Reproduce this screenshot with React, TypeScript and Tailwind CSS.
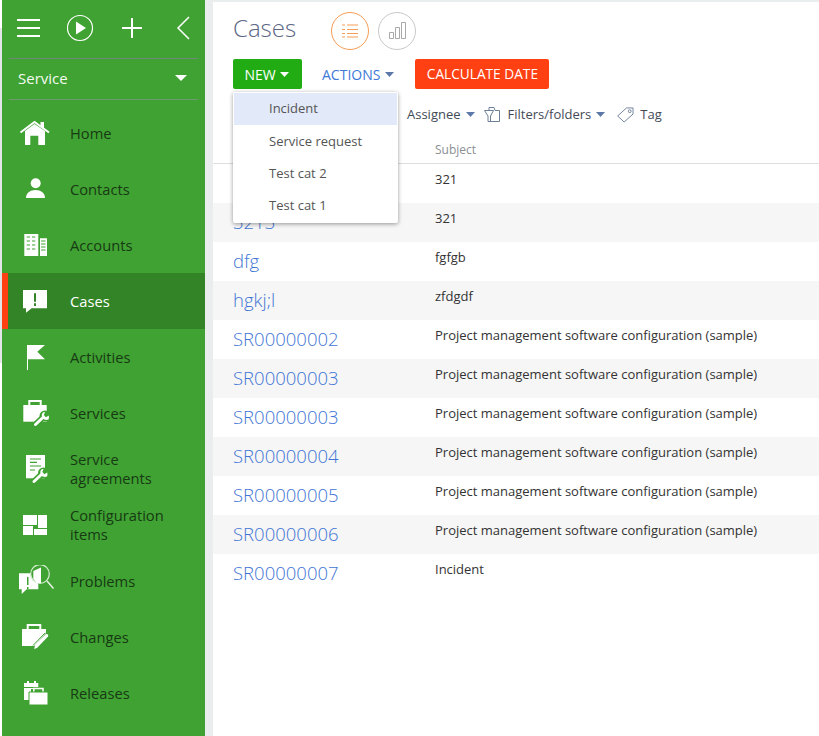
import React from "react";

const font = { fontFamily: '"Open Sans", "Noto Sans", sans-serif' };
const GREEN = "#40a232";

// all nav icons share one 40x32 box so coordinates can be read straight off the picture
const NavIcon = ({ children }: { children: React.ReactNode }) => (
  <svg width="40" height="32" viewBox="0 0 40 32" className="shrink-0">
    {children}
  </svg>
);

// wrench running from (x,y) up and to the right
const Wrench = ({ x, y }: { x: number; y: number }) => (
  <g transform={`translate(${x} ${y})`}>
    <path d="M1.500 -1.500 L10 -9.500" stroke={GREEN} strokeWidth="6" strokeLinecap="round" />
    <circle cx="11" cy="-10" r="5.500" fill={GREEN} />
    <path d="M1.500 -1.500 L9.500 -9" stroke="#fff" strokeWidth="3" strokeLinecap="round" />
    <path d="M14.500 -6.500 C10.500 -5 7 -8 8 -12 C8.500 -13.500 9.500 -14 11 -14 L9.800 -11 L11.800 -8.800 L14.800 -10.500 C15 -8.800 15 -7.500 14.500 -6.500 Z" fill="#fff" />
  </g>
);

const HomeIcon = () => (
  <NavIcon>
    <path d="M5.500 15.500 L19.500 5 L34 15.500" stroke="#fff" strokeWidth="2" fill="none" />
    <path d="M25.500 5 H29 V11.500 L25.500 9 Z" fill="#fff" />
    <path d="M10 14 L19.500 7 L30 14 V28 H23.300 V18.700 H15.300 V28 H10 Z" fill="#fff" />
  </NavIcon>
);
const ContactIcon = () => (
  <NavIcon>
    <circle cx="20.700" cy="10.300" r="5" fill="#fff" />
    <path d="M11 25 C11 20 15 17 20.500 17 C26 17 30 20 30 25 Z" fill="#fff" />
  </NavIcon>
);
const AccountIcon = () => (
  <NavIcon>
    <path d="M9.300 5 H23.300 V27 H9.300 Z M25 9.300 H32 V27 H25 Z" fill="#fff" />
    <path d="M11.700 8 H15 M17 8 H20.300 M11.700 12 H15 M17 12 H20.300 M11.700 16 H15 M17 16 H20.300 M11.700 20 H15 M17 20 H20.300" stroke={GREEN} strokeWidth="1" />
    <path d="M26 12 H30.500 M26 15 H30.500 M26 18 H30.500 M26 21 H30.500" stroke={GREEN} strokeWidth="1" />
  </NavIcon>
);
const CaseIcon = () => (
  <NavIcon>
    <path d="M8 5 H32 V23.300 H16.700 L11 27.700 V23.300 H8 Z" fill="#fff" />
    <path d="M19 8.300 H21 V16.700 H19 Z M19 18.300 H21 V21 H19 Z" fill="#338426" />
  </NavIcon>
);
const FlagIcon = () => (
  <NavIcon>
    <path d="M12 4 H13 V29 H12 Z" fill="#fff" />
    <path d="M13 4 H30 L22.300 10.700 L30 18.300 H13 Z" fill="#fff" />
  </NavIcon>
);
const ServiceIcon = () => (
  <NavIcon>
    <path d="M14.300 8 V4 H25.700 V8" stroke="#fff" strokeWidth="2" fill="none" />
    <path d="M8.300 8 H31.700 V24.700 H8.300 Z" fill="#fff" />
    <Wrench x={19} y={29} />
  </NavIcon>
);
const AgreementIcon = () => (
  <NavIcon>
    <path d="M11 2 H30 V25.300 H11 Z" fill="#fff" />
    <path d="M15 6 H26 M15 9.300 H22 M15 13 H26 M15 17 H20" stroke={GREEN} strokeWidth="1.200" />
    <Wrench x={17.500} y={30} />
  </NavIcon>
);
const ConfigIcon = () => (
  <NavIcon>
    <path d="M8 6 H22 V16 H8 Z M23 6 H32 V19 H23 Z M8 17 H18 V26 H8 Z M19 20 H32 V26 H19 Z" fill="#fff" />
  </NavIcon>
);
const ProblemIcon = () => (
  <NavIcon>
    <path d="M4 8.300 H23.300 V24.300 H11.700 L6.700 29 V24.300 H4 Z" fill="#fff" />
    <path d="M12 12 H13.500 V20 H12 Z M12 22 H13.500 V24.300 H12 Z" fill={GREEN} />
    <circle cx="25" cy="9" r="9.300" fill={GREEN} stroke="#d6eed2" strokeWidth="1.200" />
    <path d="M18.300 6 L26 2.500 V18 H21.500 L18.300 14 Z" fill="#fff" />
    <path d="M32 16 L38.500 23.500" stroke="#e6f4e3" strokeWidth="1.500" />
  </NavIcon>
);
const ChangeIcon = () => (
  <NavIcon>
    <path d="M12.700 8 V4 H25.300 V8" stroke="#fff" strokeWidth="2" fill="none" />
    <path d="M7 8 H31 V12 L19 25 H7 Z" fill="#fff" />
    <path d="M20 23.500 L30.500 13.500 C32 12.300 34 14 33 15.500 L22.500 26.500 L19.300 28.300 Z" fill="#fff" />
    <path d="M18 24.500 L30 12" stroke={GREEN} strokeWidth="1" />
  </NavIcon>
);
const ReleaseIcon = () => (
  <NavIcon>
    <path d="M12 4 H14 V6 H19 V4 H21 V6 H23.300 V10 H9 V6 H12 Z M9 11 H23.300 V12 H16 V23 H9 Z" fill="#fff" />
    <path d="M18.800 15 V11.500 H28 V15" stroke="#fff" strokeWidth="1.500" fill="none" />
    <path d="M14 15 H33 V28 H14 Z" fill="#fff" stroke={GREEN} strokeWidth="1" />
  </NavIcon>
);

const navItems: { label: React.ReactNode; icon: React.ReactNode; active?: boolean }[] = [
  { label: "Home", icon: <HomeIcon /> },
  { label: "Contacts", icon: <ContactIcon /> },
  { label: "Accounts", icon: <AccountIcon /> },
  { label: "Cases", icon: <CaseIcon />, active: true },
  { label: "Activities", icon: <FlagIcon /> },
  { label: "Services", icon: <ServiceIcon /> },
  { label: <>Service<br />agreements</>, icon: <AgreementIcon /> },
  { label: <>Configuration<br />items</>, icon: <ConfigIcon /> },
  { label: "Problems", icon: <ProblemIcon /> },
  { label: "Changes", icon: <ChangeIcon /> },
  { label: "Releases", icon: <ReleaseIcon /> },
];

const PROJECT = "Project management software configuration (sample)";
const rows = [
  { id: "321", subject: "321" },
  { id: "3213", subject: "321" },
  { id: "dfg", subject: "fgfgb" },
  { id: "hgkj;l", subject: "zfdgdf" },
  { id: "SR00000002", subject: PROJECT },
  { id: "SR00000003", subject: PROJECT },
  { id: "SR00000003", subject: PROJECT },
  { id: "SR00000004", subject: PROJECT },
  { id: "SR00000005", subject: PROJECT },
  { id: "SR00000006", subject: PROJECT },
  { id: "SR00000007", subject: "Incident" },
];

const Caret = ({ color, wide }: { color: string; wide?: boolean }) => (
  <svg width={wide ? 12 : 9} height={wide ? 6 : 5} viewBox="0 0 9 5" preserveAspectRatio="none" className="shrink-0">
    <path d="M0 0 H9 L4.500 5 Z" fill={color} />
  </svg>
);

function Sidebar() {
  return (
    <aside className="w-[203px] shrink-0 bg-[#40a232] h-full">
      <div className="h-[59px] border-b border-[#6f8a78] mx-[7px] flex items-center">
        <svg width="24" height="18" viewBox="0 0 24 18" className="ml-[8px] -mt-[2px]">
          <path d="M0 1 H23 M0 9 H23 M0 17 H23" stroke="#fff" strokeWidth="2" />
        </svg>
        <svg width="28" height="28" viewBox="0 0 28 28" className="ml-[25px] -mt-[2px]">
          <circle cx="14" cy="14" r="12.500" fill="none" stroke="#fff" strokeWidth="1.200" />
          <path d="M10 7.500 L20 14 L10 20.500 Z" fill="#fff" />
        </svg>
        <svg width="22" height="22" viewBox="0 0 22 22" className="ml-[27px] -mt-[2px]">
          <path d="M11 1 V21 M1 11 H21" stroke="#fff" strokeWidth="2" />
        </svg>
        <svg width="14" height="24" viewBox="0 0 14 24" className="ml-[33px] -mt-[2px]">
          <path d="M13 1 L2 12 L13 23" stroke="#fff" strokeWidth="1.500" fill="none" />
        </svg>
      </div>
      <div className="h-[41px] mx-[7px] border-b border-[#6f9a70] flex items-center justify-between pl-[9px] pr-[11px] pb-[2px]">
        <span className="text-[15px] text-[#f2fbf0]">Service</span>
        <Caret color="#fff" wide />
      </div>
      <nav className="pt-[5px]">
        {navItems.map((item, i) => (
          <div
            key={i}
            className={`h-[56px] flex items-center ${item.active ? "bg-[#338426] border-l-[6px] border-[#ff4013]" : ""}`}
          >
            <div className={`flex shrink-0 ${item.active ? "w-[62px] pl-[7px]" : "w-[68px] pl-[13px]"}`}>
              {item.icon}
            </div>
            <div className={`text-[14.700px] leading-[19px] ${item.active ? "text-white" : "text-[#173a14]"}`}>
              {item.label}
            </div>
          </div>
        ))}
      </nav>
    </aside>
  );
}

function Toolbar() {
  return (
    <>
      <div className="h-[57px] flex items-center pl-[20px]">
        <h1 className="text-[24px] font-light text-[#5d6785] w-[98px] mb-[6px]">Cases</h1>
        <div className="w-[38px] h-[38px] rounded-full border border-[#f59d56] flex items-center justify-center">
          <svg width="16" height="14" viewBox="0 0 16 14">
            <path d="M5 1 H16 M5 5.500 H16 M5 9.500 H16 M5 13 H16" stroke="#f59d56" strokeWidth="1" />
            <path d="M0 1 H3 M0 5.500 H3 M0 9.500 H3 M0 13 H3" stroke="#f59d56" strokeWidth="1" />
          </svg>
        </div>
        <div className="w-[38px] h-[38px] rounded-full border border-[#c9c9c9] flex items-center justify-center ml-[9px]">
          <svg width="17" height="17" viewBox="0 0 17 17" fill="none" stroke="#a8a8a8">
            <path d="M0.500 10.500 H4.500 V16.500 H0.500 Z M6.500 5.500 H10.500 V16.500 H6.500 Z M12.500 0.500 H16.500 V16.500 H12.500 Z" />
          </svg>
        </div>
      </div>
      <div className="flex items-center pl-[20px] h-[30px]">
        <button className="w-[69px] h-[30px] bg-[#22ac14] rounded-[2px] text-white text-[14px] flex items-center justify-center gap-[4px] pr-[2px]">
          NEW <Caret color="#fff" />
        </button>
        <button className="ml-[20px] text-[14px] text-[#3d78d8] flex items-center gap-[5px]">
          ACTIONS <Caret color="#5b78a8" />
        </button>
        <button className="ml-[21px] w-[134px] h-[30px] bg-[#ff4013] rounded-[2px] text-white text-[13.700px]">
          CALCULATE DATE
        </button>
      </div>
      <div className="flex items-center h-[50px] pl-[194px] text-[13px] text-[#444b57] pt-[1px]">
        <span>Assignee</span>
        <span className="ml-[5px]"><Caret color="#5b78a8" /></span>
        <svg width="16" height="15" viewBox="0 0 16 15" fill="none" stroke="#6c7f96" className="ml-[9px]">
          <path d="M5 3.500 V0.500 H10 L11 3.500 H15.500 V14.500 H6" />
          <path d="M0.500 3.500 H9.500 L6.500 9 V14.500 H4 V9 Z" />
        </svg>
        <span className="ml-[8px]">Filters/folders</span>
        <span className="ml-[5px]"><Caret color="#5b78a8" /></span>
        <svg width="17" height="16" viewBox="0 0 18 17" fill="none" stroke="#6c7f96" className="ml-[12px]">
          <path d="M0.700 9.500 L10 1 H17 V7.500 L7.500 16 Z" />
          <circle cx="13.500" cy="4.500" r="1.500" />
        </svg>
        <span className="ml-[6px]">Tag</span>
      </div>
    </>
  );
}

function CaseTable() {
  return (
    <div>
      <div className="h-[25px] border-b border-[#dcdfe0] pl-[222px] pt-[2px] text-[12px] leading-[17px] text-[#8b8f94]">
        Subject
      </div>
      {rows.map((row, i) => (
        <div key={i} className={`h-[39px] flex ${i % 2 === 1 ? "bg-[#f6f6f6]" : "bg-white"}`}>
          <div className="w-[222px] shrink-0 pl-[20px] pt-[7px] text-[18.500px] leading-[24px] font-light text-[#3f75d5]">
            {row.id}
          </div>
          <div className="text-[13px] leading-[17px] pt-[7px] text-[#333]">{row.subject}</div>
        </div>
      ))}
    </div>
  );
}

function NewMenu() {
  const options = ["Incident", "Service request", "Test cat 2", "Test cat 1"];
  return (
    <div className="absolute left-[20px] top-[92px] w-[165px] h-[131px] bg-white rounded-[2px] shadow-[0_1px_4px_rgba(0,0,0,0.4)] p-[1px]">
      {options.map((option, i) => (
        <div
          key={option}
          className={`h-[32.250px] pl-[35px] text-[13px] flex items-center text-[#555] ${i === 0 ? "bg-[#e2e9f8]" : ""}`}
        >
          {option}
        </div>
      ))}
    </div>
  );
}

export default function App() {
  return (
    <div className="w-[819px] h-[736px] overflow-hidden flex bg-white" style={font}>
      <div className="w-[2px] shrink-0 flex flex-col">
        <div className="h-[28px]" />
        <div className="h-[335px] bg-[#e3e6e6]" />
      </div>
      <Sidebar />
      <div className="w-[8px] shrink-0 bg-[#e9eded]" />
      <main className="flex-1 relative overflow-hidden">
        <div className="h-[2px] bg-[#e9eded]" />
        <Toolbar />
        <CaseTable />
        <NewMenu />
      </main>
    </div>
  );
}
